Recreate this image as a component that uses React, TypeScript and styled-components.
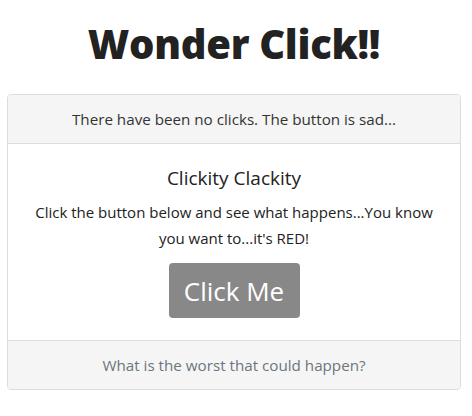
import React from "react";
import styled, { createGlobalStyle } from "styled-components";

const Global = createGlobalStyle`
  html, body { margin: 0; padding: 0; background: #fff; }
  body { font-family: "Open Sans", "Noto Sans", sans-serif; color: #212529; }
`;

const Page = styled.div`
  width: 472px;
  padding: 0 11px 0 7px;
  box-sizing: border-box;
  display: flex;
  flex-direction: column;
  align-items: stretch;
`;

const Title = styled.h1`
  margin: 18px 0 0;
  height: 76px;
  font-family: "Open Sans", "Lato", sans-serif;
  font-weight: 800;
  font-size: 40px;
  line-height: 52px;
  letter-spacing: -0.3px;
  text-align: center;
  color: #222;
`;

const Card = styled.div`
  border: 1px solid #ddd;
  border-radius: 4px;
  display: flex;
  flex-direction: column;
  overflow: hidden;
`;

const Header = styled.div<{ $muted?: boolean }>`
  background: #f5f5f5;
  height: 48px;
  display: flex;
  align-items: center;
  justify-content: center;
  font-size: 15.2px;
  color: ${(p) => (p.$muted ? "#6c757d" : "#333")};
`;

const Body = styled.div`
  border-top: 1px solid #ddd;
  border-bottom: 1px solid #ddd;
  height: 198px;
  box-sizing: border-box;
  padding: 19px 20px 0;
  display: flex;
  flex-direction: column;
  align-items: center;
  text-align: center;
`;

const CardTitle = styled.h5`
  margin: 0 0 6px;
  font-size: 19px;
  font-weight: 400;
  line-height: 30px;
  color: #222;
`;

const Text = styled.p`
  margin: 0 0 12px;
  font-size: 15px;
  line-height: 26px;
  color: #222;
`;

const Button = styled.button`
  width: 131px;
  height: 55px;
  border: none;
  border-radius: 4px;
  background: #888;
  color: #fff;
  font-family: "Open Sans", sans-serif;
  font-size: 26px;
  cursor: pointer;
`;

export default function App() {
  return (
    <>
      <Global />
      <Page>
        <Title>Wonder Click!!</Title>
        <Card>
          <Header>There have been no clicks. The button is sad...</Header>
          <Body>
            <CardTitle>Clickity Clackity</CardTitle>
            <Text>
              Click the button below and see what happens...You know
              <br />
              you want to...it's RED!
            </Text>
            <Button>Click Me</Button>
          </Body>
          <Header $muted>What is the worst that could happen?</Header>
        </Card>
      </Page>
    </>
  );
}
